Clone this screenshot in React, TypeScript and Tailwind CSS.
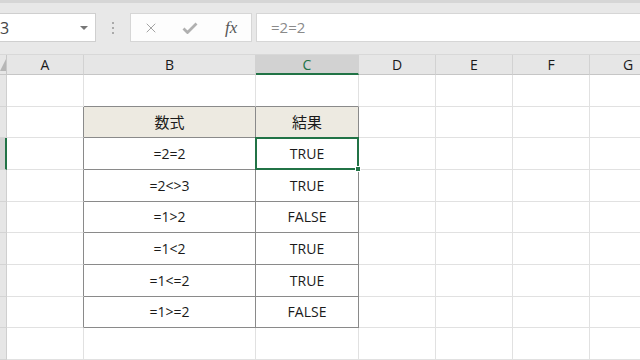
import { X } from 'lucide-react';

type Col = { key: string; width: string };

const cols: Col[] = [
  { key: 'A', width: 'w-[77px]' },
  { key: 'B', width: 'w-[172px]' },
  { key: 'C', width: 'w-[103px]' },
  { key: 'D', width: 'w-[77px]' },
  { key: 'E', width: 'w-[77px]' },
  { key: 'F', width: 'w-[77px]' },
  { key: 'G', width: 'w-[77px]' },
];

// rows 1..9, table lives in rows 2..8
const rows: { b?: string; c?: string; head?: boolean }[] = [
  {},
  { b: '数式', c: '結果', head: true },
  { b: '=2=2', c: 'TRUE' },
  { b: '=2<>3', c: 'TRUE' },
  { b: '=1>2', c: 'FALSE' },
  { b: '=1<2', c: 'TRUE' },
  { b: '=1<=2', c: 'TRUE' },
  { b: '=1>=2', c: 'FALSE' },
  {},
];

function FormulaBar() {
  return (
    <div className="h-[54px] shrink-0 bg-[#e8e8e8] border-t-[3px] border-[#d6d6d6] flex items-start pt-[10px]">
      <div className="w-[97px] h-[29px] -ml-px bg-white border border-[#cfcfcf] flex items-center overflow-hidden">
        <span className="text-[16px] text-[#444] leading-none">3</span>
        <span className="ml-auto mr-[7px] w-0 h-0 border-l-[4px] border-r-[4px] border-t-[4px] border-l-transparent border-r-transparent border-t-[#777]" />
      </div>
      <div className="w-[34px] h-[29px] flex flex-col items-center justify-center gap-[3px]">
        <span className="w-[2px] h-[2px] bg-[#aaa]" />
        <span className="w-[2px] h-[2px] bg-[#aaa]" />
        <span className="w-[2px] h-[2px] bg-[#aaa]" />
      </div>
      <div className="w-[122px] h-[29px] bg-[#fdfdfd] border border-[#d6d6d6] flex items-center">
        <X className="ml-[12px] text-[#a3a3a3]" size={16} strokeWidth={1.5} />
        <svg className="ml-[23px]" width="16" height="12" viewBox="0 0 16 12">
          <path d="M1.5 6.5 L5.5 10.5 L14.5 1.5" fill="none" stroke="#b0b0b0" strokeWidth="2.8" />
        </svg>
        <span className="ml-[27px] text-[17px] italic text-[#555] font-['Liberation_Serif',serif] leading-none">fx</span>
      </div>
      <div className="ml-[4px] flex-1 h-[29px] bg-white border border-[#d6d6d6] -mr-px flex items-center pl-[14px]">
        <span className="text-[15px] text-[#8a8a8a] leading-none">=2=2</span>
      </div>
    </div>
  );
}

function ColumnHeader() {
  return (
    <div className="flex h-[21px] border-t border-[#d8d8d8] bg-[#e6e6e6]">
      <div className="w-[7px] shrink-0 flex items-end justify-end pb-[3px] border-r border-b border-[#c8c8c8]">
        <svg width="6" height="12" viewBox="0 0 6 12">
          <path d="M6 0 L6 12 L0 12 Z" fill="#b6b6b6" />
        </svg>
      </div>
      {cols.map((c) => {
        const sel = c.key === 'C';
        return (
          <div
            key={c.key}
            className={`${c.width} shrink-0 flex items-center justify-center text-[14px] border-r border-[#d2d2d2] ${
              sel ? 'bg-[#d2d2d2] text-[#217346] border-b-2 border-b-[#217346]' : 'text-[#1a1a1a] border-b border-b-[#c6c6c6]'
            }`}
          >
            {c.key}
          </div>
        );
      })}
    </div>
  );
}

function Cell({ col, row, text, head }: { col: Col; row: number; text?: string; head?: boolean }) {
  const inTable = row >= 2 && row <= 8;
  const rightDark = inTable && (col.key === 'A' || col.key === 'B' || col.key === 'C');
  const bottomDark = row >= 1 && row <= 8 && (col.key === 'B' || col.key === 'C');
  const selected = col.key === 'C' && row === 3;
  return (
    <div
      className={`${col.width} shrink-0 relative flex items-center justify-center border-r border-b ${
        rightDark ? 'border-r-[#8a8a8a]' : 'border-r-[#e1e1e1]'
      } ${bottomDark ? 'border-b-[#8a8a8a]' : 'border-b-[#e1e1e1]'} ${
        head && inTable && (col.key === 'B' || col.key === 'C') ? 'bg-[#edeae1]' : 'bg-white'
      }`}
    >
      {text && (
        <span
          className={
            head
              ? "text-[15px] text-[#1a1a1a] font-['Noto_Sans_CJK_JP',sans-serif]"
              : 'text-[14px] text-[#1a1a1a]'
          }
        >
          {text}
        </span>
      )}
      {selected && (
        <div className="absolute -left-px -top-px -right-px -bottom-px border-2 border-[#217346] z-10">
          <div className="absolute -right-[4px] -bottom-[4px] w-[6px] h-[6px] bg-[#217346] border border-white" />
        </div>
      )}
    </div>
  );
}

export default function App() {
  return (
    <div className="w-[640px] h-[360px] overflow-hidden bg-white flex flex-col font-['Open_Sans','Noto_Sans_CJK_JP',sans-serif]">
      <FormulaBar />
      <ColumnHeader />
      <div className="flex flex-col">
        {rows.map((r, i) => {
          const rowNo = i + 1;
          const sel = rowNo === 3;
          return (
            <div key={rowNo} className="flex h-[31.67px] shrink-0">
              <div
                className={`w-[7px] shrink-0 border-b border-[#d4d4d4] ${
                  sel ? 'bg-[#d2d2d2] border-r-2 border-r-[#217346]' : 'bg-[#e6e6e6] border-r border-r-[#cfcfcf]'
                }`}
              />
              {cols.map((c) => (
                <Cell
                  key={c.key}
                  col={c}
                  row={rowNo}
                  head={r.head}
                  text={c.key === 'B' ? r.b : c.key === 'C' ? r.c : undefined}
                />
              ))}
            </div>
          );
        })}
      </div>
    </div>
  );
}
